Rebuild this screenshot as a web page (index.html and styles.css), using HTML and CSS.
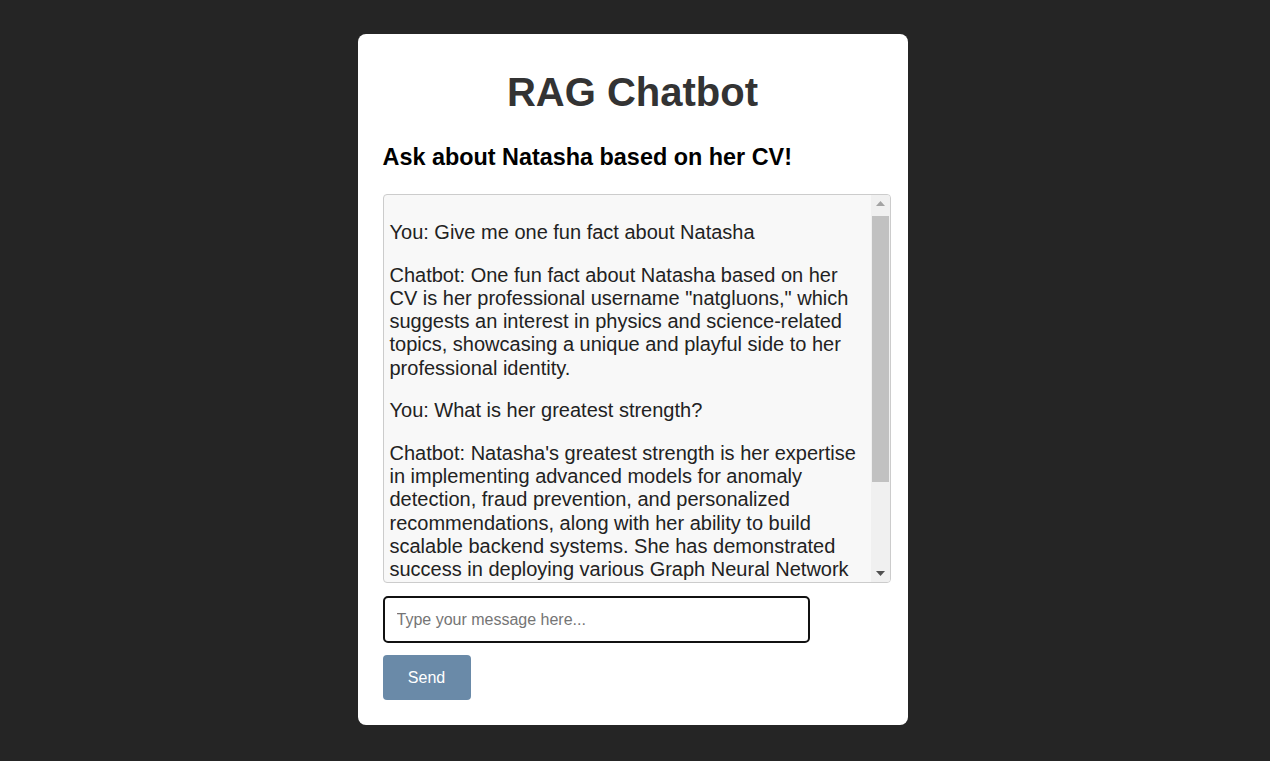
FILE: index.html
```html
<!DOCTYPE html>
<html lang="en">
<head>
<meta charset="utf-8">
<title>RAG Chatbot</title>
<link rel="stylesheet" href="styles.css">
</head>
<body>
<main class="page">
  <section class="card">
    <h1 class="title">RAG Chatbot</h1>
    <h3 class="subtitle">Ask about Natasha based on her CV!</h3>
    <div class="chat">
      <div class="messages">
        <p class="msg">You: Give me one fun fact about Natasha</p>
        <p class="msg">Chatbot: One fun fact about Natasha based on her CV is her professional username "natgluons," which suggests an interest in physics and science-related topics, showcasing a unique and playful side to her professional identity.</p>
        <p class="msg">You: What is her greatest strength?</p>
        <p class="msg">Chatbot: Natasha's greatest strength is her expertise in implementing advanced models for anomaly detection, fraud prevention, and personalized recommendations, along with her ability to build scalable backend systems. She has demonstrated success in deploying various Graph Neural Network architectures, highlighting her strong technical skills and her ability to turn complex research into practical, real-world applications.</p>
      </div>
      <div class="scrollbar" aria-hidden="true">
        <div class="sb-btn">
          <svg width="9" height="5" viewBox="0 0 9 5"><path d="M0 5 L4.5 0 L9 5 Z" fill="#a3a3a3"/></svg>
        </div>
        <div class="sb-track"><div class="sb-thumb"></div></div>
        <div class="sb-btn">
          <svg width="9" height="5" viewBox="0 0 9 5"><path d="M0 0 L9 0 L4.5 5 Z" fill="#505050"/></svg>
        </div>
      </div>
    </div>
    <input class="input" type="text" placeholder="Type your message here..." autofocus>
    <button class="send" type="button">Send</button>
  </section>
</main>
</body>
</html>
```

FILE: styles.css
```css
html, body {
  margin: 0;
  padding: 0;
  background: #252525;
  font-family: "Liberation Sans", Arial, sans-serif;
}

.page {
  min-height: 100vh;
  display: flex;
  align-items: flex-start;
  justify-content: center;
  padding: 34px 5px 0 0;
  box-sizing: border-box;
}

.card {
  width: 550px;
  height: 691px;
  box-sizing: border-box;
  background: #ffffff;
  border-radius: 8px;
  padding: 10px 25px 25px 25px;
  display: flex;
  flex-direction: column;
  align-items: flex-start;
}

.title {
  align-self: stretch;
  margin: 25px 0 29px;
  text-align: center;
  font-size: 40px;
  line-height: 46px;
  font-weight: 700;
  color: #333333;
}

.subtitle {
  margin: 0 0 23px;
  font-size: 23.4px;
  line-height: 27px;
  font-weight: 700;
  color: #000000;
}

.chat {
  width: 508px;
  height: 389px;
  box-sizing: border-box;
  border: 1px solid #cccccc;
  border-radius: 4px;
  background: #f8f8f8;
  display: flex;
  overflow: hidden;
  flex-shrink: 0;
}

.messages {
  flex: 1;
  min-width: 0;
  overflow: hidden;
  padding: 6.5px 3px 6px 6px;
}

.scrollbar {
  width: 19px;
  flex-shrink: 0;
  background: #f0f0f0;
  display: flex;
  flex-direction: column;
  padding: 0 1px;
  box-sizing: border-box;
}

.sb-btn {
  height: 17px;
  display: flex;
  align-items: center;
  justify-content: center;
  flex-shrink: 0;
}

.sb-track {
  flex: 1;
  padding-top: 4px;
}

.sb-thumb {
  height: 266px;
  background: #c1c1c1;
}

.msg {
  margin: 19.5px 0;
  font-size: 20px;
  line-height: 23.2px;
  color: #222222;
}

.input {
  margin-top: 13px;
  width: 427px;
  height: 47px;
  box-sizing: border-box;
  border: 2px solid #111111;
  border-radius: 5px;
  padding: 0 12px;
  font-family: "Liberation Sans", Arial, sans-serif;
  font-size: 16px;
  color: #222222;
  outline: none;
  background: #ffffff;
}

.input::placeholder {
  color: #757575;
}

.send {
  margin-top: 12px;
  width: 88px;
  height: 45px;
  border: none;
  border-radius: 4px;
  background: #6a8aa8;
  color: #ffffff;
  font-family: "Liberation Sans", Arial, sans-serif;
  font-size: 16px;
  padding: 0;
  cursor: pointer;
}
```
